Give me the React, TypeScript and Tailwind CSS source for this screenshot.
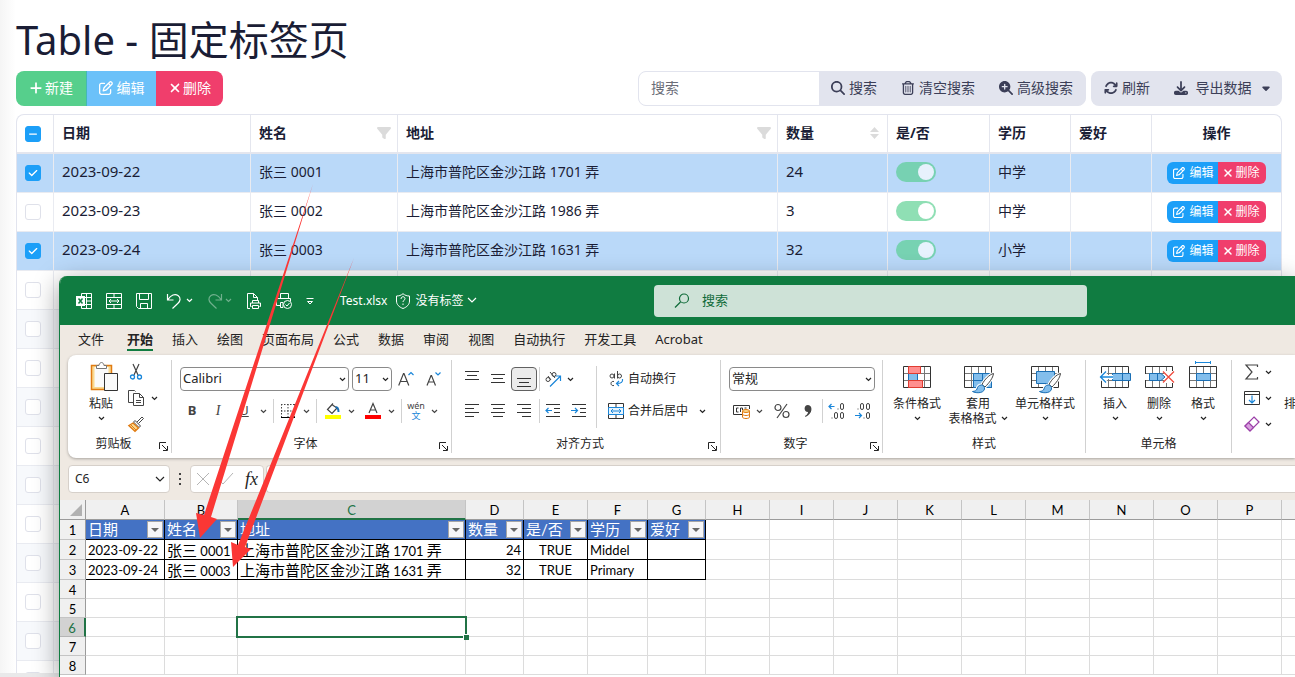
import React from 'react'
import clsx from 'clsx'
import { twMerge } from 'tailwind-merge'
import {
  FaArrowsRotate,
  FaCaretDown,
  FaCheck,
  FaDownload,
  FaFilter,
  FaMagnifyingGlass,
  FaMagnifyingGlassPlus,
  FaMinus,
  FaPlus,
  FaRegPenToSquare,
  FaRegTrashCan,
  FaXmark
} from 'react-icons/fa6'

type Row = {
  date: string
  name: string
  address: string
  count: string
  education: string
  checked: boolean
}

const rows: Row[] = [
  { date: '2023-09-22', name: '张三 0001', address: '上海市普陀区金沙江路 1701 弄', count: '24', education: '中学', checked: true },
  { date: '2023-09-23', name: '张三 0002', address: '上海市普陀区金沙江路 1986 弄', count: '3', education: '中学', checked: false },
  { date: '2023-09-24', name: '张三 0003', address: '上海市普陀区金沙江路 1631 弄', count: '32', education: '小学', checked: true }
]

const emptyRows = [4, 5, 6, 7, 8, 9, 10, 11, 12, 13, 14]

/* ---------- web page behind the workbook ---------- */

const CheckBox = ({ label, state }: { label: string; state: 'on' | 'off' | 'some' }) => (
  <label className="grid size-4 place-items-center">
    <input
      type="checkbox"
      aria-label={label}
      defaultChecked={state === 'on'}
      className={clsx(
        'col-start-1 row-start-1 size-4 appearance-none rounded-[3px] border',
        state === 'off' ? 'border-[#dfe1ea] bg-white' : 'border-[#1c9ff8] bg-[#1c9ff8]'
      )}
    />
    {state === 'on' && <FaCheck className="col-start-1 row-start-1 size-2.5 text-white" />}
    {state === 'some' && <FaMinus className="col-start-1 row-start-1 size-2.5 text-white" />}
  </label>
)

const headCell = 'border-b-2 border-r border-[#e4e6ee] px-2 text-left font-bold'
const bodyCell = 'border-b border-r border-[#e9ebf1] px-2 whitespace-nowrap overflow-hidden'
const textCell = 'pb-0.5'

const SortIcon = () => (
  <svg width="9" height="12" viewBox="0 0 9 12" className="fill-[#dbdbdb]">
    <path d="M4.500 0 9 5H0zM0 7h9l-4.500 5z" />
  </svg>
)

const RowActions = () => (
  <div className="flex justify-center text-xs text-white">
    <button type="button" className="flex h-[22px] items-center gap-1 rounded-l-md bg-[#1c9ff8] pl-1.5 pr-1">
      <FaRegPenToSquare className="size-3" /> 编辑
    </button>
    <button type="button" className="flex h-[22px] items-center gap-0.5 rounded-r-md bg-[#f03e6c] pl-1 pr-1.5">
      <FaXmark className="size-3" /> 删除
    </button>
  </div>
)

const Toolbar = () => (
  <div className="flex justify-between text-sm text-[#3c3f58]">
    <div className="flex overflow-hidden rounded-lg text-white">
      <button type="button" className="flex h-[35px] w-[70px] items-center justify-center gap-0.5 bg-[#56cf8c] pb-px">
        <FaPlus className="size-3.5" /> 新建
      </button>
      <button type="button" className="flex h-[35px] w-[70px] items-center justify-center gap-1 border-l border-[#43b9b4] bg-[#6bc1f9] pb-px">
        <FaRegPenToSquare className="size-3.5" /> 编辑
      </button>
      <button type="button" className="flex h-[35px] w-[67px] items-center justify-center gap-px bg-[#f03e6c] pb-px">
        <FaXmark className="size-3.5" /> 删除
      </button>
    </div>
    <div className="flex gap-[5px]">
      <div className="flex overflow-hidden rounded-lg border border-[#e2e4ee] bg-[#e2e4ee]">
        <input
          type="text"
          aria-label="搜索"
          placeholder="搜索"
          className="h-[33px] w-[180px] bg-white px-3 pb-0.5 placeholder:text-[#6b6d78] outline-none"
        />
        <button type="button" className="flex w-[70px] items-center justify-center gap-1 pb-px">
          <FaMagnifyingGlass className="size-3.5" /> 搜索
        </button>
        <button type="button" className="flex w-[98px] items-center justify-center gap-1 pb-px">
          <FaRegTrashCan className="size-3.5" /> 清空搜索
        </button>
        <button type="button" className="flex w-[98px] items-center justify-center gap-1 pb-px">
          <FaMagnifyingGlassPlus className="size-3.5" /> 高级搜索
        </button>
      </div>
      <div className="flex rounded-lg bg-[#e2e4ee]">
        <button type="button" className="flex w-[72px] items-center justify-center gap-1 pb-px">
          <FaArrowsRotate className="size-3.5" /> 刷新
        </button>
        <button type="button" className="flex w-[119px] items-center justify-center gap-2 pb-px">
          <FaDownload className="size-3.5" /> 导出数据
          <FaCaretDown className="size-3" />
        </button>
      </div>
    </div>
  </div>
)

const DataTable = () => (
  <div className="mt-2 min-h-0 flex-1 overflow-hidden rounded-t-lg border border-b-0 border-[#e2e4ee]">
    <table className="w-full table-fixed border-separate border-spacing-0 text-sm">
      <colgroup>
        <col className="w-[37px]" />
        <col className="w-[197px]" />
        <col className="w-[147px]" />
        <col />
        <col className="w-[110px]" />
        <col className="w-[102px]" />
        <col className="w-[81px]" />
        <col className="w-[81px]" />
        <col className="w-[129px]" />
      </colgroup>
      <thead>
        <tr className="h-[39px]">
          <th className={headCell}>
            <CheckBox label="全选" state="some" />
          </th>
          <th className={clsx(headCell, textCell)}>日期</th>
          <th className={clsx(headCell, textCell)}>
            <div className="flex items-center justify-between">
              姓名 <FaFilter className="-mr-0.5 size-3.5 text-[#dbdbdb]" />
            </div>
          </th>
          <th className={clsx(headCell, textCell)}>
            <div className="flex items-center justify-between">
              地址 <FaFilter className="-mr-0.5 size-3.5 text-[#dbdbdb]" />
            </div>
          </th>
          <th className={clsx(headCell, textCell)}>
            <div className="flex items-center justify-between">
              数量 <SortIcon />
            </div>
          </th>
          <th className={clsx(headCell, textCell)}>是/否</th>
          <th className={clsx(headCell, textCell)}>学历</th>
          <th className={clsx(headCell, textCell)}>爱好</th>
          <th className="border-b-2 border-[#e4e6ee] pb-0.5 text-center font-bold">操作</th>
        </tr>
      </thead>
      <tbody>
        {rows.map(row => (
          <tr key={row.date} className={clsx('h-[39px]', row.checked && 'bg-[#bad9f9]')}>
            <td className={bodyCell}>
              <CheckBox label={row.name} state={row.checked ? 'on' : 'off'} />
            </td>
            <td className={clsx(bodyCell, textCell, 'text-[15px]')}>{row.date}</td>
            <td className={clsx(bodyCell, textCell)}>{row.name}</td>
            <td className={clsx(bodyCell, textCell)}>{row.address}</td>
            <td className={clsx(bodyCell, textCell, 'text-[15px]')}>{row.count}</td>
            <td className={clsx(bodyCell, textCell)}>
              <input
                type="checkbox"
                role="switch"
                aria-label="是/否"
                defaultChecked
                className="block h-5 w-10 appearance-none rounded-full bg-[#54ce8d] opacity-65 before:ml-[22px] before:mt-0.5 before:block before:size-4 before:rounded-full before:bg-white"
              />
            </td>
            <td className={clsx(bodyCell, textCell)}>{row.education}</td>
            <td className={bodyCell} />
            <td className="border-b border-[#e9ebf1]">
              <RowActions />
            </td>
          </tr>
        ))}
        {emptyRows.map(n => (
          <tr key={n} className={clsx('h-[39px]', n % 2 === 1 && 'bg-[#f7f9fc]')}>
            <td className={bodyCell}>
              <CheckBox label={`第 ${n} 行`} state="off" />
            </td>
            <td className={bodyCell} />
            <td className={bodyCell} />
            <td className={bodyCell} />
            <td className={bodyCell} />
            <td className={bodyCell} />
            <td className={bodyCell} />
            <td className={bodyCell} />
            <td className="border-b border-[#e9ebf1]" />
          </tr>
        ))}
      </tbody>
    </table>
  </div>
)

/* ---------- workbook window ---------- */

type IconProps = { w?: number; h?: number; children: React.ReactNode; className?: string }

const Icon = ({ w = 16, h = 16, children, className }: IconProps) => (
  <svg
    width={w}
    height={h}
    viewBox={`0 0 ${w} ${h}`}
    fill="none"
    stroke="currentColor"
    className={clsx('shrink-0 overflow-visible', className)}
  >
    {children}
  </svg>
)

const Chevron = ({ className }: { className?: string }) => (
  <Icon w={7} h={5} className={className}>
    <path d="M1 1l2.500 2.500L6 1" strokeWidth="1.200" />
  </Icon>
)

const TitleBar = () => (
  <header className="flex h-[49px] shrink-0 items-center bg-[#107c41] text-white">
    <div className="flex flex-1 items-center">
      <div className="flex items-center gap-3.5 pl-4">
        <Icon>
          <path d="M5.500 3V.5h10v15h-10V13M10.500 .5v15M5.500 4.500h10M10 8h5.500M5.500 11.500h10" />
          <path d="M0 3h9v10H0z" fill="currentColor" stroke="none" />
          <path d="M2.500 5.500l4 5M6.500 5.500l-4 5" stroke="#107c41" strokeWidth="1.500" />
        </Icon>
        <Icon>
          <path d="M.5 .5h15v15H.5zM.5 4.500h15M.5 11.500h15M8 .5v4M8 11.500v4M3 8h10M5 6L3 8l2 2M11 6l2 2-2 2" />
        </Icon>
        <Icon>
          <path d="M.5 .5h15v15H2.500l-2-2zM3.500 .5v6h9v-6M4.500 15.500v-5h7v5" />
        </Icon>
        <div className="flex items-center gap-1">
          <Icon>
            <path d="M1.500 1v6h6M2 6.500C5 2 9 .5 12 2.500c3 2.200 2.500 5.500 0 7.800L6.500 15.500" strokeWidth="1.200" />
          </Icon>
          <Chevron />
        </div>
        <div className="flex items-center gap-0.5 opacity-40">
          <Icon>
            <path d="M14.500 1v6h-6M14 6.500C11 2 7 .5 4 2.500 1 4.700 1.500 8 4 10.300l5.500 5.200" strokeWidth="1.200" />
          </Icon>
          <Chevron />
        </div>
        <Icon>
          <path d="M4 15.500H1.500V.5h6l4 4v3M7.500 .5v4h4M6.500 10V7.500h6V10M5.500 13.500h-1v-3.500h10v3.500h-1M6.500 12.500h6v3h-6z" />
        </Icon>
        <Icon>
          <path d="M4.500 5V.5h8V5M4 12.500H.5v-7h14V8M4.500 9.500H7v5H4.500z" />
          <circle cx="11.500" cy="11.500" r="4" fill="#107c41" />
          <path d="M9.500 11.500l1.500 1.500 2.500-3" />
        </Icon>
        <Icon w={8} h={8}>
          <path d="M.5 1.500h7M1.500 4.500L4 7l2.500-2.500z" />
        </Icon>
      </div>
      <span className="pl-[26px] text-xs">Test.xlsx</span>
      <Icon className="ml-2">
        <path d="M8 .7c2 1.700 4 2.300 6.500 2.300v5c0 3.500-2.500 6-6.500 7.500C4 14 1.500 11.500 1.500 8V3C4 3 6 2.400 8 .7z" />
        <path d="M6 6c0-3 4-3 4-.3 0 1.500-2 1.500-2 3.300M8 10.500V12" />
      </Icon>
      <span className="pl-1 text-xs">没有标签</span>
      <Icon w={10} h={7} className="ml-1">
        <path d="M1 1l4 4 4-4" strokeWidth="1.200" />
      </Icon>
    </div>
    <label className="flex h-8 w-[433px] items-center gap-3 rounded bg-[#cee2d7] pl-5 text-[#0f6b39]">
      <Icon>
        <circle cx="10" cy="5.500" r="4.500" strokeWidth="1.200" />
        <path d="M6.500 9L1 14.500" strokeWidth="1.200" />
      </Icon>
      <input
        type="search"
        aria-label="搜索"
        placeholder="搜索"
        className="w-full bg-transparent text-[13px] outline-none placeholder:text-[#0f6b39]"
      />
    </label>
    <div className="w-52 shrink-0" />
  </header>
)

const tabs = ['文件', '开始', '插入', '绘图', '页面布局', '公式', '数据', '审阅', '视图', '自动执行', '开发工具', 'Acrobat']

const TabStrip = () => (
  <nav className="flex h-[30px] shrink-0 items-center gap-[19px] pl-[18px] text-[13px] leading-5 text-[#242424]">
    {tabs.map(tab => (
      <button
        type="button"
        key={tab}
        className={clsx(
          'whitespace-nowrap border-b-2',
          tab === '文件' && 'mr-1',
          tab === '开始' ? 'border-[#107c41] font-bold' : 'border-transparent'
        )}
      >
        {tab}
      </button>
    ))}
  </nav>
)

type GroupProps = { title?: string; className: string; launcher?: boolean; children: React.ReactNode }

const Group = ({ title, className, launcher, children }: GroupProps) => (
  <section className={clsx('flex shrink-0 py-[5px]', className)}>
    <div className="flex min-w-0 flex-1 flex-col">
      <div className="h-[76px] shrink-0">{children}</div>
      <div className="flex items-center text-xs leading-4">
        <h3 className="flex-1 text-center">{title}</h3>
        {launcher && (
          <button type="button" aria-label={`${title}设置`} className="pr-[3px] pt-1">
            <Icon w={9} h={9}>
              <path d="M.5 7V.5H7M3 3l5 5M8.500 4v4.500H4" />
            </Icon>
          </button>
        )}
      </div>
    </div>
    <div className="w-px bg-[#d1d1d1]" />
  </section>
)

const Divider = ({ className }: { className?: string }) => (
  <div className={clsx('w-px shrink-0 self-stretch bg-[#d1d1d1]', className)} />
)

const Tool = ({ label, className, children }: { label: string; className?: string; children: React.ReactNode }) => (
  <button
    type="button"
    aria-label={label}
    className={twMerge('flex h-6 w-[26px] shrink-0 items-center justify-center', className)}
  >
    {children}
  </button>
)

const Drop = ({ label }: { label: string }) => (
  <button type="button" aria-label={label} className="flex h-6 w-3 shrink-0 items-center justify-center">
    <Chevron />
  </button>
)

const Select = ({ label, value, className }: { label: string; value: string; className: string }) => (
  <div className={clsx('grid items-center', className)}>
    <select
      aria-label={label}
      defaultValue={value}
      className="col-start-1 row-start-1 h-6 w-full appearance-none rounded border border-[#8a8a8a] bg-white pl-0.5 text-[13px] outline-none"
    >
      <option>{value}</option>
    </select>
    <Chevron className="col-start-1 row-start-1 mr-[3px] justify-self-end" />
  </div>
)

type BigProps = { label: string; second?: string; className: string; children: React.ReactNode }

const BigButton = ({ label, second, className, children }: BigProps) => (
  <button type="button" className={clsx('flex flex-col items-center text-xs leading-[15px]', className)}>
    <span className="mb-1 flex h-8 items-end">{children}</span>
    <span className="whitespace-nowrap">{label}</span>
    {second ? (
      <span className="flex items-center gap-1 whitespace-nowrap">
        {second} <Chevron />
      </span>
    ) : (
      <span className="flex h-3.5 items-center">
        <Chevron />
      </span>
    )}
  </button>
)

const Grid = () => (
  <>
    <path d="M1.500 11.500h27M1.500 18.500h27M8.500 4.500v21M15.500 4.500v21M22.500 4.500v21" stroke="#777" />
    <path d="M1.500 4.500h27v21h-27z" stroke="#333" />
  </>
)

const Brush = () => (
  <>
    <path
      d="M30.500 11.500c-4 1-9 6-11.500 11l3 2.500c4-4 8-9 8.500-13.500zM18.500 23c-3 0-4 2-4.500 4-.5 1.500-2 2.300-4.500 2.500 2 1.500 11 2.500 12-2.500 .3-2-1-4-3-4z"
      fill="#fff"
      stroke="#fff"
      strokeWidth="3"
    />
    <path d="M30.500 11.500c-4 1-9 6-11.500 11l3 2.500c4-4 8-9 8.500-13.500z" fill="#fff" stroke="#444" />
    <path d="M18.500 23c-3 0-4 2-4.500 4-.5 1.500-2 2.300-4.500 2.500 2 1.500 11 2.500 12-2.500 .3-2-1-4-3-4z" fill="#83beec" stroke="#1a6fb5" />
  </>
)

const Clipboard = () => (
  <Group title="剪贴板" launcher className="w-[104px]">
    <div className="flex pl-4">
      <BigButton label="粘贴" className="w-[34px]">
        <Icon w={30} h={32} className="ml-1.5">
          <path d="M2.500 5.500h20v24h-20z" fill="#fbd98f" stroke="#e07b12" strokeWidth="1.500" />
          <path d="M5.500 7h14v20h-14z" fill="#fafafa" stroke="none" />
          <path d="M7.500 8.500v-3h2.500c.5-4 4.500-4 5 0h2.500v3z" fill="#fff" stroke="#777" />
          <path d="M15.500 13.500h13v17h-13z" fill="#fafafa" stroke="#333" />
        </Icon>
      </BigButton>
      <div className="flex flex-col gap-0.5 pl-2.5">
        <Tool label="剪切" className="w-4">
          <Icon>
            <path d="M5 0l5 11M11 0L6 11" stroke="#444" strokeWidth="1.200" />
            <circle cx="4.500" cy="13" r="2" stroke="#1a86d9" strokeWidth="1.300" />
            <circle cx="11.500" cy="13" r="2" stroke="#1a86d9" strokeWidth="1.300" />
          </Icon>
        </Tool>
        <div className="flex items-center gap-1">
          <Tool label="复制" className="w-4">
            <Icon>
              <path d="M5 12.500H.5V.5h6l1 1M5.500 3.500h6l4 4v8h-10zM11.500 3.500v4h4M8 10.500h5M8 12.500h5" stroke="#444" />
            </Icon>
          </Tool>
          <Drop label="复制选项" />
        </div>
        <Tool label="格式刷" className="w-4">
          <Icon>
            <path d="M9 6l5-5 1.500 1.500-5 5" fill="#fff" stroke="#444" />
            <path d="M7 4.500l5.500 5.500-1.500 1.500L5.500 6z" fill="#fff" stroke="#444" />
            <path d="M5 7L.8 9.500 7 15.300 10.500 12z" fill="#fbd98f" stroke="#e07b12" strokeWidth="1.300" />
            <path d="M3 9l5 5" stroke="#e07b12" />
          </Icon>
        </Tool>
      </div>
    </div>
  </Group>
)

const FontGroup = () => (
  <Group title="字体" launcher className="w-[280px]">
    <div className="flex items-center gap-[3px] pl-2 pt-[7px]">
      <Select label="字体" value="Calibri" className="w-[169px]" />
      <Select label="字号" value="11" className="w-10" />
      <Tool label="增大字号" className="w-[22px]">
        <Icon w={16} h={16} className="text-[#444]">
          <path d="M.7 14.500L5.500 2.500h.5l4.800 12M2.500 10.500h6.500" strokeWidth="1.200" />
          <path d="M10.500 4L13 1.500 15.500 4" stroke="#1a86d9" strokeWidth="1.200" />
        </Icon>
      </Tool>
      <Tool label="减小字号" className="w-[26px]">
        <Icon w={15} h={16} className="text-[#444]">
          <path d="M1 14.500L5 4.500h.5l4 10M2.500 11h5.500" strokeWidth="1.200" />
          <path d="M9.500 1.500L12 4l2.500-2.500" stroke="#1a86d9" strokeWidth="1.200" />
        </Icon>
      </Tool>
    </div>
    <div className="flex items-center pl-[7px] pt-2 text-[#444]">
      <Tool label="加粗">
        <b className="text-[13px]">B</b>
      </Tool>
      <Tool label="倾斜">
        <i className="font-['Liberation_Serif',serif] text-sm">I</i>
      </Tool>
      <Tool label="下划线">
        <u className="text-[13px]">U</u>
      </Tool>
      <Drop label="下划线样式" />
      <Divider className="mx-1" />
      <Tool label="边框" className="mr-0.5 w-5">
        <Icon w={14} h={14}>
          <path d="M.5 0v13M7 0v13M13.500 0v13M0 .5h14M0 7h14" strokeDasharray="1.500 1.500" />
          <path d="M0 13.500h14" stroke="#000" />
        </Icon>
      </Tool>
      <Drop label="边框样式" />
      <Divider className="ml-1 mr-1.5" />
      <Tool label="填充颜色" className="mr-0.5 w-5">
        <Icon w={16} h={16}>
          <path d="M8 .5L2.500 6.500l4.500 4L12 5 7.500 2" strokeWidth="1.200" />
          <path d="M10.500 4c2.500 0 3 2 3 5" stroke="#1a6fb5" strokeWidth="2" />
          <path d="M0 12h16v4H0z" fill="#ff0" stroke="none" />
        </Icon>
      </Tool>
      <Drop label="填充颜色选项" />
      <Tool label="字体颜色" className="ml-1.5 mr-0.5 w-5">
        <Icon w={16} h={16}>
          <path d="M4 10l4-9.500L12 10M5.500 7h5" strokeWidth="1.200" />
          <path d="M0 12h16v4H0z" fill="#f00" stroke="none" />
        </Icon>
      </Tool>
      <Drop label="字体颜色选项" />
      <Divider className="mx-1" />
      <Tool label="拼音" className="mr-0.5 w-5 flex-col text-[9px] leading-[10px]">
        <span>wén</span>
        <span className="text-[#1a86d9]">文</span>
      </Tool>
      <Drop label="拼音选项" />
    </div>
  </Group>
)

const Lines = ({ d }: { d: string }) => (
  <Icon>
    <path d={d} stroke="#333" />
  </Icon>
)

const AlignGroup = () => (
  <Group title="对齐方式" launcher className="w-[269px]">
    <div className="flex pl-[7px]">
      <div className="flex flex-col gap-2 pt-[7px]">
        <div className="flex items-center">
          <Tool label="顶端对齐">
            <Lines d="M1 .5h14M3 4.500h10M1 8.500h14" />
          </Tool>
          <Tool label="垂直居中">
            <Lines d="M1 3.500h14M3 7.500h10M1 11.500h14" />
          </Tool>
          <Tool label="底端对齐" className="rounded border border-[#616161] bg-[#ebebeb]">
            <Lines d="M1 7.500h14M3 11.500h10M1 15.500h14" />
          </Tool>
          <Divider className="mx-0.5" />
          <Tool label="方向" className="w-[22px]">
            <Icon>
              <path d="M5 15.500L15 5.500M10.500 5h5v5" stroke="#1a86d9" strokeWidth="1.200" />
              <circle cx="3" cy="8.500" r="2" stroke="#444" />
              <path d="M3 5l3 4M5 1l5 6" stroke="#444" />
              <circle cx="9" cy="3.500" r="2" stroke="#444" />
            </Icon>
          </Tool>
          <Drop label="方向选项" />
        </div>
        <div className="flex items-center">
          <Tool label="左对齐">
            <Lines d="M1 1.500h14M1 5.500h9M1 9.500h14M1 13.500h9" />
          </Tool>
          <Tool label="居中">
            <Lines d="M1 1.500h14M3 5.500h10M1 9.500h14M3 13.500h10" />
          </Tool>
          <Tool label="右对齐">
            <Lines d="M1 1.500h14M6 5.500h9M1 9.500h14M6 13.500h9" />
          </Tool>
          <Divider className="mx-0.5" />
          <Tool label="减少缩进量" className="w-[22px]">
            <Icon>
              <path d="M1 1.500h14M9 5.500h6M9 9.500h6M1 13.500h14" stroke="#333" />
              <path d="M7 7.500H1M3.500 5L1 7.500 3.500 10" stroke="#1a86d9" strokeWidth="1.200" />
            </Icon>
          </Tool>
          <Tool label="增加缩进量" className="ml-0.5">
            <Icon>
              <path d="M1 1.500h14M9 5.500h6M9 9.500h6M1 13.500h14" stroke="#333" />
              <path d="M0 7.500h6M4 5l2.500 2.500L4 10" stroke="#1a86d9" strokeWidth="1.200" />
            </Icon>
          </Tool>
        </div>
      </div>
      <div className="py-1.5 pl-1">
        <div className="h-[62px] w-px bg-[#d1d1d1]" />
      </div>
      <div className="flex flex-col gap-2 pl-[11px] pt-[7px] text-xs">
        <button type="button" className="flex h-6 items-center gap-1 whitespace-nowrap">
          <Icon>
            <circle cx="4" cy="5" r="2" stroke="#444" />
            <path d="M6.500 2.500v5M9.500 0v7.500M6 10.500c-4-1-4 5 0 4" stroke="#444" />
            <circle cx="11.500" cy="5" r="2" stroke="#444" />
            <path d="M14.500 8c.5 3-1 4.500-6 4.500M11 10l-2.500 2.500L11 15" stroke="#1a86d9" strokeWidth="1.200" />
          </Icon>
          自动换行
        </button>
        <div className="flex items-center gap-2">
          <button type="button" className="flex h-6 items-center gap-1 whitespace-nowrap">
            <Icon>
              <path d="M.5 .5h15v15H.5zM8 .5v4M8 11.500v4" stroke="#333" />
              <path d="M.5 4.500h15v7H.5zM3 8h10M5 6L3 8l2 2M11 6l2 2-2 2" fill="#e6f3fc" stroke="#1a86d9" />
            </Icon>
            合并后居中
          </button>
          <Drop label="合并选项" />
        </div>
      </div>
    </div>
  </Group>
)

const NumberGroup = () => (
  <Group title="数字" launcher className="w-[162px]">
    <div className="pl-2 pt-[7px]">
      <Select label="数字格式" value="常规" className="w-[146px]" />
    </div>
    <div className="flex items-center pl-2.5 pt-2 text-[#444]">
      <Tool label="会计数字格式" className="mr-0.5 w-5">
        <Icon w={17} h={16}>
          <path d="M9 11.500H.5v-9h16V6M5.500 5h-2v4h2M7.500 9V5h2v2M11.500 5h2" stroke="#333" />
          <path d="M9.500 8v6c0 2 7 2 7 0V8M9.500 11c0 2 7 2 7 0" fill="#fff" stroke="#e07b12" />
          <ellipse cx="13" cy="8" rx="3.500" ry="1.500" fill="#fbd98f" stroke="#e07b12" />
        </Icon>
      </Tool>
      <Drop label="会计格式选项" />
      <Tool label="百分比样式" className="ml-1">
        <Icon>
          <circle cx="4" cy="4.500" r="3" strokeWidth="1.200" />
          <circle cx="12" cy="11.500" r="3" strokeWidth="1.200" />
          <path d="M13 1L3 15" strokeWidth="1.200" />
        </Icon>
      </Tool>
      <Tool label="千位分隔样式">
        <Icon w={8} h={14}>
          <path d="M4 1c5 0 5 9-2.500 12l-.5-1c2.500-1.500 3-3 3-4C-.5 8-.5 1 4 1z" fill="currentColor" stroke="none" />
        </Icon>
      </Tool>
      <Divider className="ml-px mr-0.5" />
      <Tool label="增加小数位数" className="w-[22px]">
        <Icon>
          <path d="M6.500 3.500H1M3.500 1L1 3.500 3.500 6" stroke="#1a86d9" strokeWidth="1.200" />
          <path d="M9.500 6h1" />
          <rect x="12.500" y=".5" width="3" height="6" rx="1.500" />
          <path d="M3.500 15h1" />
          <rect x="6.500" y="9.500" width="3" height="6" rx="1.500" />
          <rect x="12.500" y="9.500" width="3" height="6" rx="1.500" />
        </Icon>
      </Tool>
      <Tool label="减少小数位数" className="ml-0.5">
        <Icon>
          <path d="M1 12.500h6.500M5 10l2.500 2.500L5 15" stroke="#1a86d9" strokeWidth="1.200" />
          <path d="M3.500 6h1" />
          <rect x="6.500" y=".5" width="3" height="6" rx="1.500" />
          <rect x="12.500" y=".5" width="3" height="6" rx="1.500" />
          <path d="M9.500 15h1" />
          <rect x="12.500" y="9.500" width="3" height="6" rx="1.500" />
        </Icon>
      </Tool>
    </div>
  </Group>
)

const StyleGroup = () => (
  <Group title="样式" className="w-[203px]">
    <div className="flex pl-1">
      <BigButton label="条件格式" className="w-[60px]">
        <Icon w={30} h={30}>
          <Grid />
          <path d="M6.500 11.500h9v7h-9z" fill="#83beec" stroke="#1a6fb5" />
          <path d="M6.500 4.500h12v7h-12zM6.500 18.500h14v7h-14z" fill="#ff8f8f" stroke="#e03c31" />
        </Icon>
      </BigButton>
      <BigButton label="套用" second="表格格式" className="w-[62px]">
        <Icon w={30} h={30}>
          <Grid />
          <path d="M10.500 11.500h18v14h-18zM10.500 18.500h18M19.500 11.500v14" fill="#83beec" stroke="#1a6fb5" />
          <Brush />
        </Icon>
      </BigButton>
      <BigButton label="单元格样式" className="w-[72px]">
        <Icon w={30} h={30}>
          <Grid />
          <path d="M6.500 9.500h18v12h-18z" fill="#83beec" stroke="#1a6fb5" />
          <Brush />
        </Icon>
      </BigButton>
    </div>
  </Group>
)

const CellGroup = () => (
  <Group title="单元格" className="w-[146px]">
    <div className="flex pl-[7px]">
      <BigButton label="插入" className="w-11">
        <Icon w={30} h={30}>
          <Grid />
          <path d="M12.500 11.500h18v7h-18zM22.500 11.500v7" fill="#83beec" stroke="#1a6fb5" />
          <path d="M13 15H0M6 9.500L.5 15 6 20.500" stroke="#fff" strokeWidth="4" />
          <path d="M13 15H0M6 9.500L.5 15 6 20.500" stroke="#1a86d9" strokeWidth="1.300" />
        </Icon>
      </BigButton>
      <BigButton label="删除" className="w-11">
        <Icon w={30} h={30}>
          <Grid />
          <path d="M0 12h5v6H0zM20 9h10v12H20z" fill="#fff" stroke="none" />
          <path d="M5.500 11.500H17l4 3.500-4 3.500H5.500zM13.500 11.500v7" fill="#83beec" stroke="#1a6fb5" />
          <path d="M19 9.500l11 11M30 9.500l-11 11" stroke="#ef4b3f" strokeWidth="1.300" />
        </Icon>
      </BigButton>
      <BigButton label="格式" className="w-11">
        <Icon w={30} h={30}>
          <Grid />
          <path d="M8.500 11.500h14v7h-14z" fill="#83beec" stroke="#1a6fb5" />
          <path d="M7.500 .5h15M7.500 -1v3M22.500 -1v3" stroke="#1a86d9" />
        </Icon>
      </BigButton>
    </div>
  </Group>
)

const EditGroup = () => (
  <Group className="w-[104px]">
    <div className="flex">
      <div className="flex flex-col gap-0.5 pl-3">
        <div className="flex items-center gap-0.5">
          <Tool label="自动求和" className="w-4">
            <Icon>
              <path d="M13.500 3V1H2l6 7-6 7h11.500v-2" stroke="#444" strokeWidth="1.200" />
            </Icon>
          </Tool>
          <Drop label="求和选项" />
        </div>
        <div className="flex items-center gap-0.5">
          <Tool label="填充" className="w-4">
            <Icon>
              <path d="M.5 1.500h15v13H.5zM.5 4.500h15" stroke="#333" />
              <path d="M8 5.500V13M5 10l3 3 3-3" stroke="#1a86d9" strokeWidth="1.200" />
            </Icon>
          </Tool>
          <Drop label="填充选项" />
        </div>
        <div className="flex items-center gap-0.5">
          <Tool label="清除" className="w-4">
            <Icon>
              <path d="M10 1l5 5-9 9-5-5z" fill="#fff" stroke="#9b3fa8" strokeWidth="1.200" />
              <path d="M4.500 6.500l5 5L6 15l-5-5z" fill="#d9a0df" stroke="#9b3fa8" strokeWidth="1.200" />
            </Icon>
          </Tool>
          <Drop label="清除选项" />
        </div>
      </div>
      <button type="button" className="h-[88px] whitespace-nowrap pl-2.5 text-xs">
        排序和筛选
      </button>
    </div>
  </Group>
)

const Ribbon = () => (
  <div className="ml-2 flex h-[103px] shrink-0 overflow-hidden rounded-l-lg bg-white text-[#242424] shadow-[0_1px_3px_rgba(0,0,0,0.3)]">
    <Clipboard />
    <FontGroup />
    <AlignGroup />
    <NumberGroup />
    <StyleGroup />
    <CellGroup />
    <EditGroup />
  </div>
)

const FormulaBar = () => (
  <div className="flex shrink-0 items-center py-[7px] pl-2 text-[#242424]">
    <label className="flex h-7 w-[102px] items-center rounded border border-[#d6d0ca] bg-white px-1.5 pr-1">
      <input type="text" aria-label="名称框" defaultValue="C6" className="w-full min-w-0 text-xs outline-none" />
      <Icon w={10} h={7}>
        <path d="M1 1l4 4 4-4" strokeWidth="1.200" />
      </Icon>
    </label>
    <Icon w={20} h={12}>
      <path d="M9 0h2v2H9zM9 5h2v2H9zM9 10h2v2H9z" fill="#444" stroke="none" />
    </Icon>
    <div className="flex h-7 w-[74px] items-center gap-2.5 rounded border border-[#d6d0ca] bg-white pl-1.5">
      <Icon w={12} h={12} className="text-[#b5b5b5]">
        <path d="M0 0l12 12M12 0L0 12" />
      </Icon>
      <Icon w={14} h={12} className="text-[#b5b5b5]">
        <path d="M0 7l4 4L14 0" />
      </Icon>
      <i className="pl-0.5 font-['Liberation_Serif',serif] text-lg leading-none">fx</i>
    </div>
    <input
      type="text"
      aria-label="编辑栏"
      className="ml-0.5 h-7 min-w-0 flex-1 rounded-l border border-r-0 border-[#d6d0ca] bg-white outline-none"
    />
  </div>
)

const columns = ['A', 'B', 'C', 'D', 'E', 'F', 'G', 'H', 'I', 'J', 'K', 'L', 'M', 'N', 'O', 'P', 'Q']
const sheetHead = ['日期', '姓名', '地址', '数量', '是/否', '学历', '爱好']
const sheetRows = [
  ['2023-09-22', '张三 0001', '上海市普陀区金沙江路 1701 弄', '24', 'TRUE', 'Middel', ''],
  ['2023-09-24', '张三 0003', '上海市普陀区金沙江路 1631 弄', '32', 'TRUE', 'Primary', '']
]
const blankCols = columns.slice(7)

// Chinese runs are set larger than the Latin text beside them
const CellText = ({ text }: { text: string }) => (
  <>
    {text.split(/([\u4e00-\u9fff]+)/).map((part, i) => (
      <span key={i} className={i % 2 === 1 ? 'text-[15px]' : 'text-[13px]'}>
        {part}
      </span>
    ))}
  </>
)

const RowHead = ({ n, active }: { n: number; active?: boolean }) => (
  <th
    scope="row"
    className={clsx(
      'border-b pt-0.5 text-[13px] font-normal',
      active
        ? 'border-r-2 border-b-[#b5b5b5] border-r-[#217346] bg-[#d2d2d2] text-[#217346]'
        : 'border-r border-b-[#c4c4c4] border-r-[#9b9b9b] bg-[#f0f0f0]'
    )}
  >
    {n}
  </th>
)

const blankCell = 'border-b border-r border-[#dcdcdc] bg-white'

const Sheet = () => (
  <div className="min-h-0 flex-1 overflow-hidden bg-white">
    <table className="w-[1286px] table-fixed border-separate border-spacing-0 font-['Lato','Noto_Sans_CJK_SC',sans-serif] leading-none text-black">
      <colgroup>
        <col className="w-[26px]" />
        <col className="w-[79px]" />
        <col className="w-[73px]" />
        <col className="w-[228px]" />
        <col className="w-[58px]" />
        <col className="w-16" />
        <col className="w-[60px]" />
        <col className="w-[58px]" />
        {blankCols.map(c => (
          <col key={c} className="w-16" />
        ))}
      </colgroup>
      <thead>
        <tr className="h-5">
          <th aria-label="全选" className="border-b border-r border-[#9b9b9b] bg-[#f0f0f0] pl-2.5">
            <Icon w={12} h={12}>
              <path d="M12 0v12H0z" fill="#b1b1b1" stroke="none" />
            </Icon>
          </th>
          {columns.map(c => (
            <th
              key={c}
              scope="col"
              className={clsx(
                'border-r border-r-[#c4c4c4] pt-0.5 text-[13px] font-normal',
                c === 'C' ? 'border-b-2 border-b-[#217346] bg-[#d2d2d2] text-[#217346]' : 'border-b border-b-[#9b9b9b] bg-[#f0f0f0]'
              )}
            >
              {c}
            </th>
          ))}
        </tr>
      </thead>
      <tbody>
        <tr className="h-5">
          <RowHead n={1} />
          {sheetHead.map(title => (
            <td key={title} className="border-b border-r border-black bg-[#4472c4] p-0 pl-0.5 text-[15px] text-white">
              <div className="flex h-[19px] items-center justify-between">
                <span className="whitespace-nowrap">{title}</span>
                <button
                  type="button"
                  aria-label={`筛选${title}`}
                  className="mr-px flex h-[17px] w-4 shrink-0 items-center justify-center border border-[#a6a6a6] bg-[#f6f6f8]"
                >
                  <Icon w={8} h={4}>
                    <path d="M0 0h8L4 4z" fill="#666" stroke="none" />
                  </Icon>
                </button>
              </div>
            </td>
          ))}
          {blankCols.map(c => (
            <td key={c} className={blankCell} />
          ))}
        </tr>
        {sheetRows.map((cells, r) => (
          <tr key={r} className="h-5">
            <RowHead n={r + 2} />
            {cells.map((text, i) => (
              <td key={i} className="border-b border-r border-black px-0.5">
                <div
                  className={clsx(
                    'flex h-[19px] items-baseline whitespace-pre leading-5',
                    i === 3 && 'justify-end',
                    i === 4 && 'justify-center'
                  )}
                >
                  <CellText text={text} />
                </div>
              </td>
            ))}
            {blankCols.map(c => (
              <td key={c} className={blankCell} />
            ))}
          </tr>
        ))}
        {[4, 5, 6, 7, 8].map(n => (
          <tr key={n} className="h-[19px]">
            <RowHead n={n} active={n === 6} />
            {columns.map(c => (
              <td key={c} className={clsx(blankCell, n === 6 && c === 'C' && 'relative')}>
                {n === 6 && c === 'C' && (
                  <div className="absolute -inset-0.5 border-2 border-[#217346]">
                    <div className="absolute -bottom-1 -right-1 size-[6px] border-l border-t border-white bg-[#217346]" />
                  </div>
                )}
              </td>
            ))}
          </tr>
        ))}
      </tbody>
    </table>
  </div>
)

const Workbook = () => (
  <div className="absolute bottom-0 left-[59px] right-0 top-[276px] flex flex-col overflow-hidden rounded-tl-lg border-l border-[#107c41] bg-[#efe9e2] shadow-[0_6px_26px_rgba(0,0,0,0.4)]">
    <TitleBar />
    <TabStrip />
    <Ribbon />
    <FormulaBar />
    <Sheet />
  </div>
)

// Red pointers from the selected rows to their exported rows
const Pointers = () => (
  <svg className="pointer-events-none absolute left-0 top-0" width="360" height="580" viewBox="0 0 360 580" fill="#fb3735">
    <path d="M313 184L204 515l-8-2 4 25 17-19-6-2z" />
    <path d="M354 258L238 545l-7-3 2 25 18-18-6-2z" />
  </svg>
)

const App = () => (
  <div className="relative flex h-screen flex-col overflow-hidden bg-white bg-[linear-gradient(to_right,#f5f5f5,#ffffff_16px)] font-['Noto_Sans','Noto_Sans_CJK_SC',sans-serif] text-[#1a1d35]">
    <main className="flex min-h-0 flex-1 flex-col pl-4 pr-[13px] pt-4">
      <h1 className="mb-[7px] text-[40px] leading-[48px]">Table - 固定标签页</h1>
      <Toolbar />
      <DataTable />
    </main>
    <div className="h-1 bg-[#e9e9ea]" />
    <Workbook />
    <Pointers />
  </div>
)

export default App
